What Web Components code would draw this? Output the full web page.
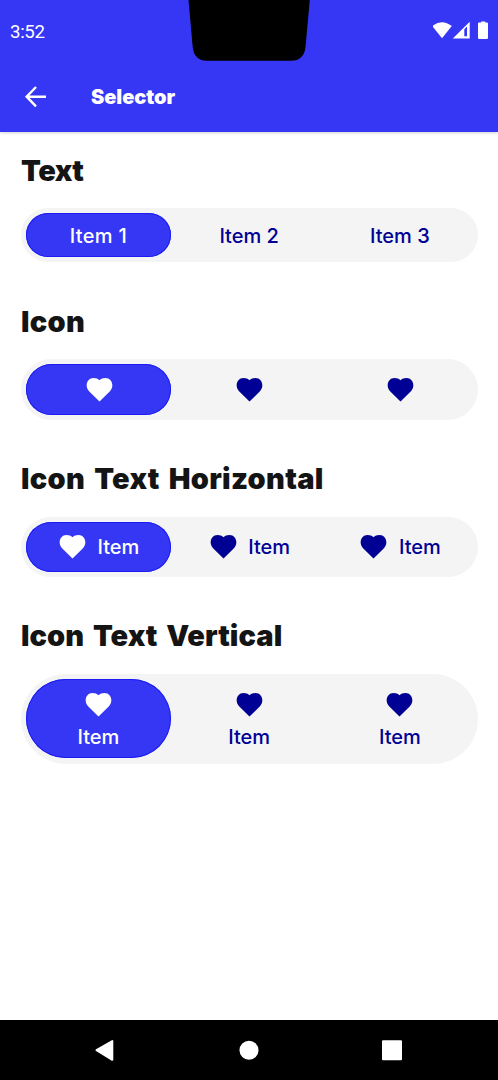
<!DOCTYPE html>
<html lang="en">
<head>
<meta charset="utf-8">
<title>Selector</title>
<style>
html,body{margin:0;height:100%;background:#fff}
body{font-family:Inter,"Liberation Sans",sans-serif;overflow:hidden}
</style>
</head>
<body>
<demo-screen>
  <status-bar slot="top" time="3:52"></status-bar>
  <app-bar slot="top">Selector</app-bar>
  <demo-section heading="Text" style="--hls:-.5px">
    <item-selector style="--h:54.2px"><selector-item selected style="--ls:.3px">Item 1</selector-item><selector-item>Item 2</selector-item><selector-item>Item 3</selector-item></item-selector>
  </demo-section>
  <demo-section heading="Icon" style="--hls:.3px">
    <item-selector style="--h:60.5px"><selector-item selected icon></selector-item><selector-item icon></selector-item><selector-item icon></selector-item></item-selector>
  </demo-section>
  <demo-section heading="Icon Text Horizontal" style="--hls:.3px">
    <item-selector style="--h:60.5px"><selector-item selected icon>Item</selector-item><selector-item icon>Item</selector-item><selector-item icon>Item</selector-item></item-selector>
  </demo-section>
  <demo-section heading="Icon Text Vertical" style="--hls:.05px">
    <item-selector style="--h:89.7px"><selector-item selected icon vertical>Item</selector-item><selector-item icon vertical>Item</selector-item><selector-item icon vertical>Item</selector-item></item-selector>
  </demo-section>
  <nav-bar slot="bottom"></nav-bar>
</demo-screen>
<script>
const define = (name, render) => customElements.define(name, class extends HTMLElement {
  constructor() { super(); this.attachShadow({ mode: 'open' }); }
  connectedCallback() { this.shadowRoot.innerHTML = render(this); }
});

define('demo-screen', () => `
<style>
:host{display:flex;flex-direction:column;height:1080px;width:498px;background:#fff}
header{height:131.5px;flex:none;background:#3636f5;box-shadow:0 1px 3px rgba(0,0,0,.18)}
main{flex:1;padding:20.3px 20.2px 0 20.5px}
</style>
<header><slot name="top"></slot></header><main><slot></slot></main><slot name="bottom"></slot>`);

define('status-bar', el => `
<style>
:host{display:flex;justify-content:space-between;height:62px;color:#fff;position:relative}
.time{font:18.7px/64px Roboto,sans-serif;padding-left:10px;letter-spacing:-.35px}
.notch{position:absolute;left:188px;top:0}
.icons{width:65px;height:62px}
svg{display:block}
</style>
<span class="time">${el.getAttribute('time')}</span>
<svg class="notch" width="123" height="62" viewBox="0 0 123 62"><path d="M.5 0H121.800L117.500 47Q116 60.800 103 60.800H19Q6 60.800 4.700 47Z"/></svg>
<svg class="icons" viewBox="433 0 65 62" fill="#fff">
<path d="M432.200 26Q442 18.400 451.800 26L442 38.200Z"/>
<path fill-rule="evenodd" d="M469.700 21.700V38.600H452.800ZM464.300 29.300V36.200H467V26.600Z"/>
<path d="M479.600 22.400h1.600V21.500h4v.9h1.600a1.200 1.200 0 0 1 1.200 1.200V37.700a1.200 1.200 0 0 1-1.200 1.200h-7.600a1.200 1.200 0 0 1-1.200-1.200V23.600a1.200 1.200 0 0 1 1.200-1.200z"/>
</svg>`);

define('app-bar', () => `
<style>
:host{display:flex;align-items:center;height:69.5px;color:#fff;font-size:20px;font-weight:900}
svg{margin-left:24px;width:24px;height:24px;flex:none}
span{margin-left:43px;letter-spacing:-.05px}
</style>
<svg viewBox="0 0 24 24" fill="none" stroke="#fff" stroke-width="2.400"><path d="M22 11.700H3M12 2L2.600 11.700L12 21.400"/></svg>
<span><slot></slot></span>`);

define('demo-section', el => `
<style>
:host{display:block;margin-bottom:40.3px}
h2{margin:0 0 18.5px .5px;font-size:29px;line-height:38px;font-weight:900;color:#141414;white-space:nowrap;letter-spacing:var(--hls,0);word-spacing:3px}
</style>
<h2>${el.getAttribute('heading')}</h2><slot></slot>`);

define('item-selector', () => `
<style>
:host{display:grid;grid-template-columns:repeat(3,1fr);gap:5.2px;box-sizing:border-box;height:var(--h);padding:5.2px;border-radius:45px;background:#f4f4f4}
</style><slot></slot>`);

define('selector-item', el => `
<style>
:host{display:flex;align-items:center;justify-content:center;gap:11.500px;border-radius:40px;color:#000094;font-size:20px;line-height:26px;font-weight:450;letter-spacing:var(--ls,0)}
:host([selected]){background:#3636f5;color:#fff;box-shadow:inset 0 0 0 1px #1c1cf2;font-weight:500}
:host([vertical]){flex-direction:column;gap:6.500px;padding-top:3.500px}
:host([icon]:not([vertical])) {padding-left:1.5px}
svg{display:block;width:27px;height:27px}
span{padding-top:1px}
:host([vertical]) span{padding-top:0}
</style>
${el.hasAttribute('icon') ? '<svg viewBox="0 0 27 27" fill="currentColor"><path d="M13.500 25.600L3.300 15.500C-1.700 10.300 .8 1.900 7.600 1.900C10 1.900 12 2.700 13.500 4.200C15 2.700 17 1.900 19.400 1.900C26.200 1.900 28.700 10.300 23.700 15.500Z"/></svg>' : ''}
${el.textContent ? '<span><slot></slot></span>' : ''}`);

define('nav-bar', () => `
<style>
:host{display:block;height:60.500px;background:#000;flex:none}
svg{display:block}
</style>
<svg width="498" height="60.500" viewBox="0 1019.500 498 60.500" fill="#fff" stroke="#fff" stroke-linejoin="round">
<path d="M96.500 1049.700L112.300 1040.500V1059.300Z" stroke-width="2"/>
<circle cx="249" cy="1049.700" r="9.500" stroke="none"/>
<rect x="383" y="1040.700" width="18" height="18" stroke-width="2"/>
</svg>`);
</script>
</body>
</html>
